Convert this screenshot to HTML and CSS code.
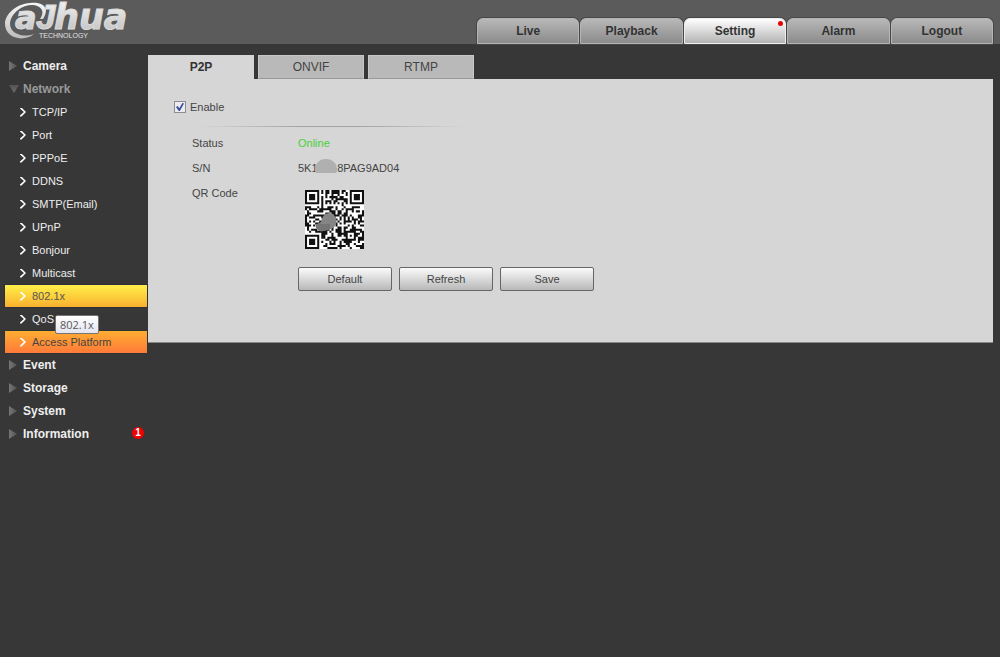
FILE: index.html
```
<!DOCTYPE html>
<html lang="en">
<head>
<meta charset="utf-8">
<title>P2P Setting</title>
<link rel="stylesheet" href="styles.css">
</head>
<body>
<header class="header">
  <svg class="logo" viewBox="0 0 136 44" role="img" aria-label="alhua technology">
    <defs>
      <linearGradient id="metal" x1="0" y1="0" x2="0" y2="1">
        <stop offset="0" stop-color="#f6f6f6"/><stop offset="1" stop-color="#bcbcbc"/>
      </linearGradient>
    </defs>
    <path fill="url(#metal)" d="M46 10C45 4 38 2 30 3C16 4 5 14 5 24C5 34 15 40 25 38C29 37 32 36 34 34C28 36 22 36 18 34C7 30 8 18 18 10C26 4 38 3 42 10C43 13 42 16 40 19L43 19C45 16 46 13 46 10Z"/>
    <text class="logo-word small" x="15" y="29">a</text>
    <text class="logo-stem" x="36" y="29">J</text>
    <text class="logo-word" x="54" y="29">hua</text>
    <text class="logo-sub" x="39" y="38">TECHNOLOGY</text>
  </svg>
  <nav class="main-nav">
    <a href="#live">Live</a>
    <a href="#playback">Playback</a>
    <a href="#setting" class="active">Setting<span class="dot"></span></a>
    <a href="#alarm">Alarm</a>
    <a href="#logout">Logout</a>
  </nav>
</header>
<div class="layout">
  <nav class="sidebar">
    <a class="group" href="#camera">Camera</a>
    <a class="group open" href="#network">Network</a>
    <a class="item" href="#tcpip">TCP/IP</a>
    <a class="item" href="#port">Port</a>
    <a class="item" href="#pppoe">PPPoE</a>
    <a class="item" href="#ddns">DDNS</a>
    <a class="item" href="#smtp">SMTP(Email)</a>
    <a class="item" href="#upnp">UPnP</a>
    <a class="item" href="#bonjour">Bonjour</a>
    <a class="item" href="#multicast">Multicast</a>
    <a class="item hover" href="#8021x">802.1x<span class="tooltip">802.1x</span></a>
    <a class="item" href="#qos">QoS</a>
    <a class="item current" href="#access">Access Platform</a>
    <a class="group" href="#event">Event</a>
    <a class="group" href="#storage">Storage</a>
    <a class="group" href="#system">System</a>
    <a class="group" href="#information">Information<span class="badge">1</span></a>
  </nav>
  <main class="content">
    <div class="tabs">
      <button class="tab selected" type="button">P2P</button>
      <button class="tab" type="button">ONVIF</button>
      <button class="tab" type="button">RTMP</button>
    </div>
    <section class="panel">
      <div class="enable"><input type="checkbox" id="enable" checked><label for="enable">Enable</label></div>
      <div class="divider"></div>
      <dl class="info">
        <dt>Status</dt><dd class="online">Online</dd>
        <dt>S/N</dt><dd>5K1<span class="mask"></span>G8PAG9AD04</dd>
        <dt>QR Code</dt>
        <dd>
          <svg class="qr" viewBox="0 0 59 59" role="img" aria-label="QR code">
            <rect width="59" height="59" fill="#fff"/>
            <path id="modules" fill="#111" transform="scale(2.0345)"/>
            <path fill="#858585" d="M17 29C18 25 21 23 25 23C33 25 34 36 26 39C21 40 17 43 13 40C9 37 11 33 15 33Z"/>
            <path fill="#666" opacity=".5" d="M11 34H25V39C20 40 17 43 13 40C11 38 10 36 11 34Z"/>
          </svg>
        </dd>
      </dl>
      <div class="actions">
        <button type="button">Default</button>
        <button type="button">Refresh</button>
        <button type="button">Save</button>
      </div>
    </section>
  </main>
</div>
<script src="qr.js"></script>
</body>
</html>
```
FILE: qr.js
```
// Builds the module path: three finder squares, one alignment square, timing lines and data cells.
const size = 29;
let seed = 4391;
const next = () => (seed = (seed * 1103515245 + 12345) % 2147483648) / 2147483648;
const ring = (x, y, cx, cy, outer) => {
  const d = Math.max(Math.abs(x - cx), Math.abs(y - cy));
  if (d > outer) return null;
  return outer === 4 ? d === 3 || d < 2 : d === 2 || d === 0;
};
let path = "";
for (let y = 0; y < size; y++) {
  for (let x = 0; x < size; x++) {
    const data = next() < 0.52;
    const cell = ring(x, y, 3, 3, 4) ?? ring(x, y, 25, 3, 4) ?? ring(x, y, 3, 25, 4) ??
      ring(x, y, 22, 22, 2) ?? (x === 6 || y === 6 ? (x + y) % 2 === 0 : data);
    if (cell) path += `M${x} ${y}h1v1h-1z`;
  }
}
document.getElementById("modules").setAttribute("d", path);
```
FILE: styles.css
```
* { box-sizing: border-box; }
body {
  margin: 0;
  min-height: 100vh;
  background: #373737;
  color: #444;
  font: 11px/16px "Liberation Sans", Arial, sans-serif;
}
a { color: inherit; text-decoration: none; }
button { font: inherit; color: inherit; }

.header {
  display: flex;
  justify-content: space-between;
  align-items: flex-end;
  height: 44px;
  padding-right: 7px;
  background: #5b5b5b;
}
.logo { width: 136px; height: 44px; overflow: visible; }
.logo text { fill: url(#metal); }
.logo-word { font: italic bold 35px "DejaVu Sans", sans-serif; stroke: #dcdcdc; stroke-width: 1px; }
.logo-word.small { font-size: 32px; }
.logo-stem { font: italic bold 35px "Liberation Sans", sans-serif; stroke: #dcdcdc; stroke-width: 1px; }
.logo .logo-sub { font: 7px "Liberation Sans", sans-serif; fill: #e0e0e0; }

.main-nav { display: flex; gap: 1px; width: 516px; }
.main-nav a {
  position: relative;
  flex: 1;
  height: 26px;
  border: 1px solid #b5b5b5;
  border-radius: 6px 6px 0 0;
  background: linear-gradient(#b8b8b8, #8b8b8b);
  box-shadow: 0 0 0 1px #474747;
  color: #333;
  font-size: 12px;
  font-weight: bold;
  line-height: 24px;
  text-align: center;
}
.main-nav .active { border-color: #eee; background: linear-gradient(#fff, #b4b4b4); }
.dot {
  position: absolute;
  top: 2px;
  right: 2px;
  width: 5px;
  height: 5px;
  border-radius: 50%;
  background: #e60000;
}

.layout { display: flex; padding: 11px 7px 0 5px; }
.sidebar { flex: none; width: 143px; padding-right: 1px; color: #eee; }
.group, .item {
  display: flex;
  align-items: center;
  height: 22px;
  margin-bottom: 1px;
}
.group { gap: 6px; padding-left: 4px; font-size: 12px; font-weight: bold; }
.group::before {
  content: "";
  width: 8px;
  height: 10px;
  background: linear-gradient(90deg, #757575, #555);
  clip-path: polygon(0 0, 100% 50%, 0 100%);
}
.group.open { gap: 4px; color: #999; }
.group.open::before {
  width: 10px;
  height: 8px;
  background: linear-gradient(#565350, #716c65);
  clip-path: polygon(0 0, 100% 0, 50% 100%);
}
.item { position: relative; gap: 6px; padding-left: 15px; }
.item::before {
  content: "";
  width: 6px;
  height: 9px;
  background: #fff;
  clip-path: polygon(0 0, 25% 0, 100% 50%, 25% 100%, 0 100%, 0 88%, 65% 50%, 0 12%);
}
.item.hover {
  z-index: 1;
  background: linear-gradient(#fff04a, #f9b02e);
  box-shadow: 0 0 0 1px #2c2e3a;
  color: #555;
}
.item.current {
  background: linear-gradient(#ffad33, #ff7a38);
  box-shadow: 0 0 0 1px #2c3438;
  color: #444;
}
.tooltip {
  position: absolute;
  left: 50px;
  top: 30px;
  padding: 0 4px;
  border: 1px solid #767676;
  border-radius: 2px;
  background: linear-gradient(#fff, #e4e5f0);
  color: #575757;
  font: 11px/17px "Open Sans", sans-serif;
}
.badge {
  width: 12px;
  height: 12px;
  margin: 0 3px 2px auto;
  border-radius: 50%;
  background: #f00000;
  color: #fff;
  font-size: 10px;
  line-height: 12px;
  text-align: center;
}

.content { flex: 1; min-width: 0; }
.tabs { display: flex; gap: 4px; }
.tab {
  width: 106px;
  height: 24px;
  padding: 0;
  border: 1px solid #c8c8c8;
  border-bottom-color: #999;
  background: #b9b9b9;
  font-size: 12px;
}
.tab.selected { border-color: #d6d6d6; background: #d6d6d6; color: #333; font-weight: bold; }
.panel {
  padding: 20px 26px 50px;
  border-bottom: 1px solid #888;
  background: #d6d6d6;
}
.enable { display: flex; align-items: center; gap: 4px; }
.enable input {
  appearance: none;
  width: 12px;
  height: 12px;
  margin: 0;
  border: 1px solid #8a8d92;
  background: #ececf0;
}
.enable input:checked::before {
  content: "";
  display: block;
  width: 8px;
  height: 8px;
  margin: 1px;
  background: #344d9c;
  clip-path: polygon(0 50%, 22% 38%, 42% 65%, 80% 0, 100% 5%, 48% 100%, 35% 100%);
}
.divider {
  max-width: 310px;
  height: 1px;
  margin: 11px 0 8px;
  background: linear-gradient(90deg, #d6d6d6 8%, #a4a4a4 40%, #a4a4a4 60%, #d6d6d6 94%);
}
.info {
  display: grid;
  grid-template-columns: 106px 1fr;
  row-gap: 9px;
  margin: 0;
  padding-left: 18px;
}
.info dd { margin: 0; }
.info .online { color: #4ad03b; }
.mask {
  position: relative;
  display: inline-block;
  width: 11px;
}
.mask::after {
  content: "";
  position: absolute;
  left: -3px;
  bottom: -1px;
  width: 22px;
  height: 14px;
  border-radius: 10px 10px 2px 2px;
  background: #b0b0b0;
}
.qr { display: block; width: 59px; height: 59px; margin: 5px 7px 0; }
.actions { display: flex; gap: 7px; padding: 18px 0 1px 124px; }
.actions button {
  width: 94px;
  height: 24px;
  border: 1px solid #666;
  border-radius: 2px;
  background: linear-gradient(#fbfbfb, #b8b8b8);
}
```
